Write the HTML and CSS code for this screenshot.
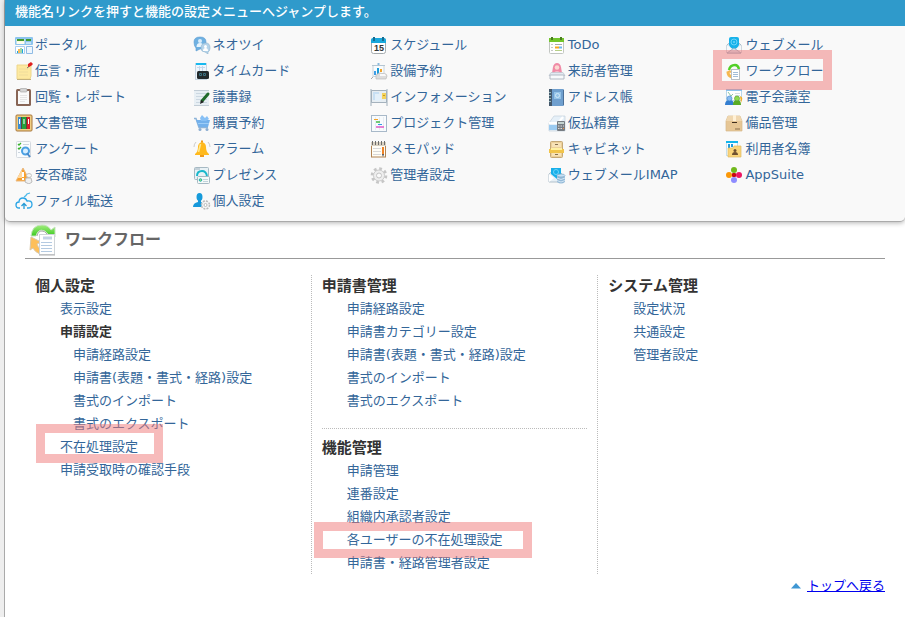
FILE: index.html
```html
<!DOCTYPE html>
<html lang="ja">

<head>
    <meta charset="UTF-8">
    <meta name="viewport" content="width=device-width, initial-scale=1.0">
    <title>ワークフロー</title>
    <link rel="stylesheet" href="styles.css">
</head>

<body>
    <div class="page">
        <!-- 機能メニュー -->
        <nav class="menu">
            <p class="menu-title">機能名リンクを押すと機能の設定メニューへジャンプします。</p>
            <ul class="menu-list">
                <li><a href="#"><svg class="icon" viewBox="0 0 18 18"><rect x="0" y="1" width="18" height="8" rx="1" fill="#8cc4ee"/><rect x="1.500" y="3" width="8" height="5" fill="#fffbe0"/><path d="M2 4h7M11 4h5" stroke="#3f9a30" stroke-width="2"/><path d="M2 7h7M11 7h5" stroke="#fff" stroke-width="1"/><rect x="0" y="10" width="10" height="8" rx="1" fill="#a9cdee"/><rect x="1" y="11" width="8" height="6" fill="#fff"/><path d="M2.500 17v-2M7.500 17v-4" stroke="#1aa6e0"/><path d="M4 17v-4" stroke="#f5a623" stroke-width="1.500"/><path d="M6 17v-5" stroke="#4caf50"/><rect x="11" y="10" width="7" height="8" rx="1" fill="#8fbbe4"/><rect x="12" y="11" width="5" height="6" fill="#eef6fd"/></svg>ポータル</a></li>
                <li><a href="#"><svg class="icon" viewBox="0 0 18 18"><path d="M1 6q0-5 6-5t6 5v2q0 5-6 5l-4 2v-3Q1 10 1 6z" fill="#6fb1e2" stroke="#5a9bd0" stroke-width=".6"/><circle cx="7" cy="5" r="2" fill="#d8edfb"/><path d="M3.500 11q0-4 3.500-4t3.500 4z" fill="#e6f4fd"/><path d="M8 12q0-5 5-5 4 0 4 5 0 3-2 4v2l-3-2q-4 0-4-4z" fill="#b4d3e9" stroke="#8fb4cf" stroke-width=".6"/><circle cx="12.500" cy="10.500" r="1.500" fill="#fff"/><path d="M10 15q0-3 2.500-3t2.500 3z" fill="#fff"/></svg>ネオツイ</a></li>
                <li><a href="#"><svg class="icon" viewBox="0 0 18 18"><rect x="1.500" y="2.500" width="14" height="15" rx="2" fill="#fff" stroke="#a5abae"/><path d="M1 7V4q0-2 2-2h11q2 0 2 2v3z" fill="#19a8dc"/><path d="M4 1v4M13 1v4" stroke="#176c91" stroke-width="2"/><text class="day" x="9" y="15">15</text></svg>スケジュール</a></li>
                <li><a href="#"><svg class="icon" viewBox="0 0 18 18"><rect x="1.500" y="2.500" width="14" height="15" rx="1" fill="#fff" stroke="#c2c6c2"/><path d="M1 2h15v4H1z" fill="#72c52c"/><path d="M3 1h2v3H3zM12 1h2v3h-2z" fill="#4a7d20"/><path d="M3 8.500h2M3 11.500h2M3 14.500h2" stroke="#c8c8c8"/><path d="M7 8.500h7" stroke="#aaa"/><path d="M7 11.500h4" stroke="#f6a623" stroke-width="2"/><path d="M11 11.500h3" stroke="#6bb7f0" stroke-width="2"/><path d="M7 14.500h7" stroke="#b6cf86"/></svg>ToDo</a></li>
                <li><a href="#"><svg class="icon" viewBox="0 0 18 18"><path d="M2 9l7-6 7 6v8H2z" fill="#dfe9f2" stroke="#a4b7c6"/><path d="M4 3q0-2 2-2h6q2 0 2 2v6q-2 4-5 4T4 9z" fill="#17b2ea"/><circle cx="9" cy="6" r="3" fill="none" stroke="#6dd3f8"/><circle cx="9" cy="6" r="1" fill="#6dd3f8"/><path d="M2 9l5 4-5 4zM16 9l-5 4 5 4z" fill="#f6f9fb"/><path d="M2 17l7-5 7 5z" fill="#d3e0eb" stroke="#8ea5b8" stroke-width=".7"/></svg>ウェブメール</a></li>

                <li><a href="#"><svg class="icon" viewBox="0 0 18 18"><path d="M2 3h14v11l-1 3H2z" fill="#fde9a0" stroke="#eed68c"/><path d="M4 7h9M4 10h9M4 13h9" stroke="#efdc9c"/><path d="M2 17.500h14" stroke="#c4b27e"/><path d="M16 3l-4 3" stroke="#777"/><path d="M13 2l3-2 2 2-2 2-3 1z" fill="#df2020"/></svg>伝言・所在</a></li>
                <li><a href="#"><svg class="icon" viewBox="0 0 18 18"><rect x="2.500" y="1.500" width="11" height="16" fill="#eef5fc" stroke="#c8d6e3"/><path d="M3 2h10" stroke="#18b9ef" stroke-width="2"/><path d="M4 5.500h8M6.500 4v8M9.500 4v8" stroke="#c3d8ec"/><rect x="4" y="9" width="12" height="8" rx="1.500" fill="#22292c"/><path d="M6.500 11.500h2v2h-2zM10.500 11.500h2v2h-2z" stroke="#3a7080" fill="none"/></svg>タイムカード</a></li>
                <li><a href="#"><svg class="icon" viewBox="0 0 18 18"><path d="M8.500 3V1" stroke="#8dbbdd" stroke-width="2"/><rect x="3" y="3.500" width="11" height="11" fill="#f8fbfd" stroke="#cbd4da"/><path d="M2 3.500h13" stroke="#b4c6d2"/><path d="M5 13V9" stroke="#3f9ee6" stroke-width="2"/><path d="M8 13V6" stroke="#1b9bd9" stroke-width="2"/><path d="M11 10V7" stroke="#f1a52c" stroke-width="2"/><path d="M3 15l-2 2" stroke="#aaa"/><path d="M6 13l3-2 7 1 1 2-1 3H6z" fill="#dcdcdc" stroke="#bbb" stroke-width=".7"/><path d="M10 12h5l1 2h-6z" fill="#f9f9f9"/></svg>設備予約</a></li>
                <li><a href="#"><svg class="icon" viewBox="0 0 18 18"><path d="M4 11l1-6q1-4 4-4t4 4l1 6z" fill="#f08aa6"/><circle cx="9" cy="5.500" r="2.300" fill="#fbd8d1"/><path d="M6 12q0-3 3-3t3 3z" fill="#f9bccb"/><path d="M3 10.500h12l2 3H1z" fill="#e3eaf2" stroke="#bcc4ce" stroke-width=".7"/><path d="M2 13h14v4H2z" fill="#f8fafc" stroke="#b3bac4"/></svg>来訪者管理</a></li>
                <li><a class="marked marked-menu" href="#"><svg class="icon" viewBox="0 0 18 18"><path d="M4 8q1-5 6-5 3 0 4 4" fill="none" stroke="#52d028" stroke-width="2.500"/><path d="M3 10q0 4 4 5" fill="none" stroke="#f6b850" stroke-width="3"/><path d="M1 10l4-2 2 3z" fill="#f6b850"/><rect x="6.500" y="7.500" width="8" height="10" fill="#fff" stroke="#b9c0c5"/><path d="M8 10.500h5M8 12.500h5M8 14.500h5" stroke="#a2bdd8"/></svg>ワークフロー</a></li>

                <li><a href="#"><svg class="icon" viewBox="0 0 18 18"><rect x="1" y="1" width="15" height="17" rx="1.500" fill="#886555"/><rect x="3" y="3" width="11" height="13" fill="#fafafa"/><rect x="5" y="0.500" width="7" height="3.500" rx="1" fill="#d4d4d4" stroke="#a0a0a0" stroke-width=".6"/><path d="M5 7.500h7M5 9.500h7M5 11.500h7M5 13.500h5" stroke="#e5e5e5"/></svg>回覧・レポート</a></li>
                <li><a href="#"><svg class="icon" viewBox="0 0 18 18"><rect x="1" y="2" width="15" height="15" fill="#e8eff4"/><path d="M1 2.500h15M1 17.500h15" stroke="#c2cdd6"/><path d="M3 5.500h11M3 8.500h11M3 11.500h11M3 14.500h11" stroke="#ccd8e2"/><path d="M9 13l6-7" stroke="#1f6a2b" stroke-width="3" stroke-linecap="round"/><path d="M7 16l1-4 3 2z" fill="#222"/></svg>議事録</a></li>
                <li><a href="#"><svg class="icon" viewBox="0 0 18 18"><path d="M1.500 2.500h15v12h-15z" fill="#e6edf2" stroke="#a5b2bd"/><path d="M1 1v17M17 1v17" stroke="#9faeba"/><path d="M3 4h6v8H3z" fill="#c8e0f4"/><path d="M5 6h6v7H5z" fill="#e3f0fa"/><path d="M12 5h4v6h-4z" fill="#f4d35e"/><path d="M13 7.500h2" stroke="#c99a1d"/></svg>インフォメーション</a></li>
                <li><a href="#"><svg class="icon" viewBox="0 0 18 18"><rect x="2" y="1" width="14" height="17" rx="1" fill="#6f9fce"/><rect x="15" y="2" width="1" height="15" fill="#4c7097"/><rect x="1" y="1" width="3" height="17" fill="#44586c"/><path d="M1 4.500h2M1 7.500h2M1 10.500h2M1 13.500h2" stroke="#9bb"/><rect x="6" y="4" width="7" height="7" fill="#94c3e8"/><circle cx="9.500" cy="7.500" r="2" fill="none" stroke="#d0e8f8"/></svg>アドレス帳</a></li>
                <li><a href="#"><svg class="icon" viewBox="0 0 18 18"><rect x="1.500" y="1.500" width="15" height="11" fill="#fff" stroke="#b8d6ea"/><path d="M1 2h16" stroke="#8bc4ed" stroke-width="2"/><path d="M3 4l3 4 2-2" stroke="#8fc6a2" fill="none"/><path d="M10 5.500h5M10 7.500h5" stroke="#d6dfe6"/><path d="M0 17q0-5 4.500-5T9 17z" fill="#337ed0"/><circle cx="4.500" cy="10.500" r="2.500" fill="#87bcf2" stroke="#4c8ccb" stroke-width=".7"/><path d="M8 17q0-5 4-5t4 5z" fill="#58ab23"/><circle cx="12" cy="10.500" r="2.500" fill="#8fda4d" stroke="#5ca432" stroke-width=".7"/><path d="M15 8q3 1 2 4l-1 3" fill="#f1ae27"/></svg>電子会議室</a></li>

                <li><a href="#"><svg class="icon" viewBox="0 0 18 18"><rect x="1" y="1" width="16" height="16" rx="1" fill="#f0cf83" stroke="#a8763c"/><rect x="3" y="3" width="12" height="12" fill="#594832"/><rect x="3" y="3" width="3" height="12" fill="#3c8cd0"/><rect x="7" y="3" width="4" height="12" fill="#22a13b"/><rect x="12" y="3" width="3" height="12" fill="#d51e2a"/><path d="M4.500 5v5M9 5v5M13.500 5v5" stroke="#fff"/></svg>文書管理</a></li>
                <li><a href="#"><svg class="icon" viewBox="0 0 18 18"><path d="M1 4.500h2l3 9h9" fill="none" stroke="#8db4d9" stroke-width="1.500"/><path d="M3 6h14l-2 7H6z" fill="#73b1ec"/><path d="M7 4l2-3 3 3 2-2 2 3-3 2H8z" fill="#87c0f5"/><path d="M5 9.500h11" stroke="#9dcdf7"/><circle cx="7" cy="15.500" r="1.500" fill="#8caed1"/><circle cx="14" cy="15.500" r="1.500" fill="#8caed1"/></svg>購買予約</a></li>
                <li><a href="#"><svg class="icon" viewBox="0 0 18 18"><rect x="1.500" y="1.500" width="15" height="16" fill="#f8fbfd" stroke="#a8b9c9"/><path d="M5.500 3v13M9.500 3v13M13.500 3v13" stroke="#e6edf3"/><path d="M4 5.500h4" stroke="#f4a327"/><path d="M6 8h4" stroke="#46b948" stroke-width="1.500"/><path d="M8 10.500h4" stroke="#2f9ae7"/><path d="M6 13h8" stroke="#e05ac5" stroke-width="1.500"/></svg>プロジェクト管理</a></li>
                <li><a href="#"><svg class="icon" viewBox="0 0 18 18"><path d="M1 9l5-7h11v15H1z" fill="#e6f0f8" stroke="#c3d1dd" stroke-width=".7"/><path d="M1 9h9l5-6" fill="none" stroke="#fff" stroke-width="2"/><path d="M1 11h8v5H1z" fill="#9bcbf1"/><rect x="9" y="7" width="8" height="10" rx="1" fill="#777d83"/><path d="M10 9h6" stroke="#c4d3d1" stroke-width="2"/><path d="M10 12h1.500m1 0H14m1 0h1M10 14.500h1.500m1 0H14" stroke="#ddd"/><path d="M15 14.500h1" stroke="#f78d3b"/></svg>仮払精算</a></li>
                <li><a href="#"><svg class="icon" viewBox="0 0 18 18"><path d="M3 2h12l2 5v10H1V7z" fill="#e6c695" stroke="#d6b88b" stroke-width=".7"/><path d="M3 2h12l2 5H1z" fill="#f0d7af"/><path d="M8 1h3v6H8z" fill="#fff1d7"/><path d="M7 8.500h5" stroke="#3f2e1e"/><path d="M10 15h5" stroke="#b89a70" stroke-width="2"/></svg>備品管理</a></li>

                <li><a href="#"><svg class="icon" viewBox="0 0 18 18"><rect x="1.500" y="1.500" width="14" height="16" rx="1" fill="#fafcfe" stroke="#d5dae0"/><path d="M3 4l1 1 2-2M3 8l1 1 2-2" fill="none" stroke="#3cb22e" stroke-width="1.300"/><path d="M8 4.500h6M3 12.500h2" stroke="#ccd5de"/><circle cx="10.500" cy="11" r="3.500" fill="#d8eeff" stroke="#4ba1e4" stroke-width="2"/><path d="M12 13l3 4" stroke="#4a88c8" stroke-width="2"/></svg>アンケート</a></li>
                <li><a href="#"><svg class="icon" viewBox="0 0 18 18"><path d="M2 14q3-2 3-7 0-4 4-5 4 1 4 5 0 5 3 7v1H2z" fill="#ffb91d"/><path d="M7.500 4q-1 4-2 8" stroke="#ffe98f" stroke-width="1.500" fill="none"/><path d="M8 1.500h2M7 16h4" stroke="#f09b1b" stroke-width="2"/><path d="M3 2Q1 4 1 7M15 2q2 2 2 5" stroke="#ccc" fill="none"/></svg>アラーム</a></li>
                <li><a href="#"><svg class="icon" viewBox="0 0 18 18"><rect x="1.500" y="3" width="14" height="14" fill="#fffdf6" stroke="#b28452"/><path d="M1 2h15v4H1z" fill="#d8d0c0"/><path d="M2.500 1v4M5.500 1v4M8.500 1v4M11.500 1v4M14.500 1v4" stroke="#6c6c6c"/><path d="M3 8.500h8M3 11.500h8M3 14.500h8" stroke="#d8d8d8"/><path d="M13 7v7" stroke="#ef8428" stroke-width="2"/><path d="M12 14h2l-1 3z" fill="#444"/></svg>メモパッド</a></li>
                <li><a href="#"><svg class="icon" viewBox="0 0 18 18"><rect x="2.500" y="1.500" width="12" height="16" rx="1" fill="#ecd09a" stroke="#c5a877"/><path d="M4 3h9v4H4zM4 13h9v3H4z" fill="#f7e2b7"/><path d="M7 4.500h3M7 14.500h3" stroke="#86704d"/><path d="M1 9h15v4H1z" fill="#f1c44a"/><path d="M3 8h11v2H3z" fill="#fff0a0"/></svg>キャビネット</a></li>
                <li><a href="#"><svg class="icon" viewBox="0 0 18 18"><rect x="1.500" y="1.500" width="11" height="14" fill="#f9fdff" stroke="#c5deed"/><path d="M1 2h12" stroke="#13b5ed" stroke-width="2"/><path d="M4 4v5M7 4v3" stroke="#239ddd" stroke-width="2"/><path d="M3 8h5l1-2h7v11H3z" fill="#fad57a" stroke="#deba66" stroke-width=".7"/><circle cx="10" cy="10.500" r="1.500" fill="#6e5030"/><path d="M7 15q0-3 3-3t3 3z" fill="#6e5030"/></svg>利用者名簿</a></li>

                <li><a href="#"><svg class="icon" viewBox="0 0 18 18"><path d="M8 2l7 13H1z" fill="#f9a12e" stroke="#eab981" stroke-linejoin="round"/><path d="M7 4v8H2z" fill="#ffd9a0"/><path d="M8 6v5M8 12v2" stroke="#fff" stroke-width="2"/><ellipse cx="14" cy="9.500" rx="2.500" ry="2" fill="#f5f5f5" stroke="#c4c4c4"/><path d="M11 12h5l1 4-3 2-4-2z" fill="#f0f0f0" stroke="#bbb"/></svg>安否確認</a></li>
                <li><a href="#"><svg class="icon" viewBox="0 0 18 18"><rect x="1.500" y="1.500" width="14" height="12" rx="1" fill="#e9f2f6" stroke="#a6b9c3"/><path d="M2 3h5" stroke="#c3d1d9" stroke-width="2"/><path d="M4 10q0-5 5-5 4 0 5 5" fill="none" stroke="#19b8cc" stroke-width="2"/><rect x="4.500" y="10.500" width="12" height="7" rx="1" fill="#f6faf9" stroke="#a6b9c3"/><circle cx="7.500" cy="14" r="1.300" fill="#a6e36e" stroke="#25b2b4"/><path d="M10 13.500h5M10 15.500h5" stroke="#c2d4dc"/></svg>プレゼンス</a></li>
                <li><a href="#"><svg class="icon" viewBox="0 0 18 18"><circle cx="9" cy="9.500" r="6.800" fill="none" stroke="#c6c6c6" stroke-width="3" stroke-dasharray="2.700 2.640"/><circle cx="9" cy="9.500" r="5.500" fill="#eee" stroke="#ccc"/><circle cx="9" cy="9.500" r="2.500" fill="#fafafa" stroke="#c4c4c4"/></svg>管理者設定</a></li>
                <li><a href="#"><svg class="icon" viewBox="0 0 18 18"><path d="M1 8l6-5 7 5v8H1z" fill="#e7f0f6" stroke="#b1c1cc"/><path d="M3 2h10v8l-4 3-6-5z" fill="#18afe9"/><circle cx="8" cy="6" r="2.500" fill="none" stroke="#6dd3f8"/><path d="M1 8l5 4-5 4z" fill="#fff"/><path d="M9 10v6q4 3 8 0v-6z" fill="#94bad8"/><ellipse cx="13" cy="9.500" rx="4" ry="1.500" fill="#c7e1f4" stroke="#84a9c7" stroke-width=".7"/><path d="M9 12q4 3 8 0M9 14.500q4 3 8 0" fill="none" stroke="#d3e6f4"/></svg>ウェブメールIMAP</a></li>
                <li><a href="#"><svg class="icon" viewBox="0 0 18 18"><circle cx="9" cy="4" r="3" fill="#71b91c"/><circle cx="4" cy="9" r="3" fill="#fb9807"/><circle cx="14" cy="9" r="3" fill="#ec1763"/><circle cx="9" cy="14" r="3" fill="#8e8cff"/><rect x="7" y="7" width="4" height="4" rx="1" fill="#c60812"/></svg>AppSuite</a></li>

                <li><a href="#"><svg class="icon" viewBox="0 0 18 18"><path d="M5 16H4q-3 0-3-3t3-3q0-4 4-4 3 0 4 3 5-1 5 3.500 0 3.500-4 3.500h-1" fill="none" stroke="#2aa5e6" stroke-width="1.300"/><path d="M9 17v-5M6.500 14L9 11.500l2.500 2.500" fill="none" stroke="#239ad6" stroke-width="1.300"/><path d="M9 5q2-1 3-3l3-1" fill="none" stroke="#4bb9e9" stroke-width="1.300"/></svg>ファイル転送</a></li>
                <li><a href="#"><svg class="icon" viewBox="0 0 18 18"><ellipse cx="6.500" cy="5" rx="3" ry="4" fill="#169bdb"/><path d="M5 8h3v2l4 2v3H0q0-4 5-5z" fill="#1798da"/><circle cx="12.500" cy="13" r="4" fill="#f4f4f4" stroke="#bbb" stroke-width="1.500" stroke-dasharray="2 1.140"/><circle cx="12.500" cy="13" r="1.500" fill="#fff" stroke="#bbb"/></svg>個人設定</a></li>
            </ul>
        </nav>

        <!-- ワークフロー設定 -->
        <main class="content">
            <h1 class="content-title">
                <svg class="title-icon" viewBox="0 0 30 32"><defs><linearGradient id="green" x1="0" y1="0" x2="0" y2="1"><stop offset="0" stop-color="#a2ed7d"/><stop offset="1" stop-color="#31c719"/></linearGradient></defs><path d="M3 13l10 5-4 2q1 3 3 5v5q-5-2-7-6l-3 2z" fill="#fdbf5a" stroke="#d9c7a8"/><path d="M3 12Q4 1 14 1q6 0 9 5l4-3v10H17l3-3q-3-4-7-4-4 1-5 6z" fill="url(#green)" stroke="#c4e3bb"/><path d="M9 12q1-5 5-5 3 0 5 3" fill="none" stroke="#aaa"/><rect x="11.500" y="10.500" width="15" height="20" fill="#fff" stroke="#cfd4d8"/><path d="M11 31h16" stroke="#b0b0b0"/><path d="M15 14h9" stroke="#c4d2e5" stroke-width="3"/><path d="M13 18.500h11M13 21.500h11M13 24.500h11M13 27.500h11" stroke="#b4cae1"/></svg>
                ワークフロー
            </h1>

            <div class="columns">
                <div class="column">
                    <section class="group">
                        <h2>個人設定</h2>
                        <ul>
                            <li><a href="#">表示設定</a></li>
                            <li>
                                <strong>申請設定</strong>
                                <ul>
                                    <li><a href="#">申請経路設定</a></li>
                                    <li><a href="#">申請書(表題・書式・経路)設定</a></li>
                                    <li><a href="#">書式のインポート</a></li>
                                    <li><a href="#">書式のエクスポート</a></li>
                                </ul>
                            </li>
                            <li><a class="marked marked-absence" href="#">不在処理設定</a></li>
                            <li><a href="#">申請受取時の確認手段</a></li>
                        </ul>
                    </section>
                </div>

                <div class="column">
                    <section class="group">
                        <h2>申請書管理</h2>
                        <ul>
                            <li><a href="#">申請経路設定</a></li>
                            <li><a href="#">申請書カテゴリー設定</a></li>
                            <li><a href="#">申請書(表題・書式・経路)設定</a></li>
                            <li><a href="#">書式のインポート</a></li>
                            <li><a href="#">書式のエクスポート</a></li>
                        </ul>
                    </section>
                    <section class="group">
                        <h2>機能管理</h2>
                        <ul>
                            <li><a href="#">申請管理</a></li>
                            <li><a href="#">連番設定</a></li>
                            <li><a href="#">組織内承認者設定</a></li>
                            <li><a class="marked marked-users" href="#">各ユーザーの不在処理設定</a></li>
                            <li><a href="#">申請書・経路管理者設定</a></li>
                        </ul>
                    </section>
                </div>

                <div class="column">
                    <section class="group">
                        <h2>システム管理</h2>
                        <ul>
                            <li><a href="#">設定状況</a></li>
                            <li><a href="#">共通設定</a></li>
                            <li><a href="#">管理者設定</a></li>
                        </ul>
                    </section>
                </div>
            </div>

            <p class="to-top">
                <svg class="arrow" viewBox="0 0 10 6"><path d="M5 0l5 5.500H0z" fill="#3f97d3"/></svg>
                <a href="#">トップへ戻る</a>
            </p>
        </main>
    </div>
</body>

</html>
```

FILE: styles.css
```css
* {
    box-sizing: border-box;
}
body {
    margin: 0;
    padding-left: 4px;
    background: #eee;
    color: #333;
    font-family: "DejaVu Sans", "Noto Sans CJK JP", sans-serif;
    font-size: 13px;
    line-height: 23px;
}
ul {
    margin: 0;
    padding: 0;
    list-style: none;
}
a {
    color: #369;
    text-decoration: none;
}
.page {
    min-height: 100vh;
    background: #fff;
    border-left: 1px solid #aaa;
}

/* 機能メニュー */
.menu {
    background: #f9f9f9;
    border-bottom: 1px solid #aaa;
    border-radius: 0 0 5px 5px;
    box-shadow: 0 1px 5px rgba(0, 0, 0, 0.3);
}
.menu-title {
    margin: 0;
    padding: 0 10px 2px;
    background: #2f9acb;
    color: #fff;
    font-weight: 500;
    line-height: 24px;
}
.menu-list {
    display: grid;
    grid-template-columns: repeat(5, 1fr);
    padding: 6px 2px 7px 10px;
}
.menu-list a {
    display: inline-flex;
    gap: 2px;
    line-height: 26px;
    vertical-align: top;
}
.icon {
    width: 18px;
    height: 18px;
    margin-top: 4px;
}
.day {
    fill: #333;
    font-family: "Liberation Sans", sans-serif;
    font-size: 9px;
    font-weight: bold;
    text-anchor: middle;
}

/* 設定メニュー */
.content {
    padding: 0 20px;
}
.content-title {
    display: flex;
    align-items: center;
    gap: 7px;
    margin: 0 0 16px;
    padding: 2px 3px;
    border-bottom: 1px solid #999;
    color: #666;
    font-size: 16px;
    line-height: 32px;
}
.title-icon {
    width: 30px;
    height: 32px;
}
.columns {
    display: grid;
    grid-template-columns: repeat(3, 1fr);
}
.column {
    padding: 0 10px;
    border-right: 1px dotted #bbb;
}
.column:last-child {
    border-right: none;
}
.group + .group {
    margin-top: 16px;
    padding-top: 8px;
    border-top: 1px dotted #bbb;
}
.group h2 {
    margin: 0;
    font-size: 15px;
    line-height: 22px;
}
.group ul {
    padding-left: 25px;
}
.group ul ul {
    padding-left: 13px;
}
.to-top {
    display: flex;
    justify-content: flex-end;
    align-items: center;
    gap: 6px;
    margin: 0;
}
.to-top a {
    color: #00e;
    text-decoration: underline;
}
.arrow {
    width: 10px;
    height: 6px;
}

/* 強調枠 */
.marked {
    position: relative;
}
.marked::after {
    content: "";
    position: absolute;
    border: 9px solid rgba(240, 120, 120, 0.5);
    pointer-events: none;
}
.marked-menu::after {
    inset: -8px -9px -6px -12px;
}
.marked-absence::after {
    inset: -15px -25px -9px -24px;
}
.marked-users::after {
    inset: -10px -30px -11px -33px;
}
```
